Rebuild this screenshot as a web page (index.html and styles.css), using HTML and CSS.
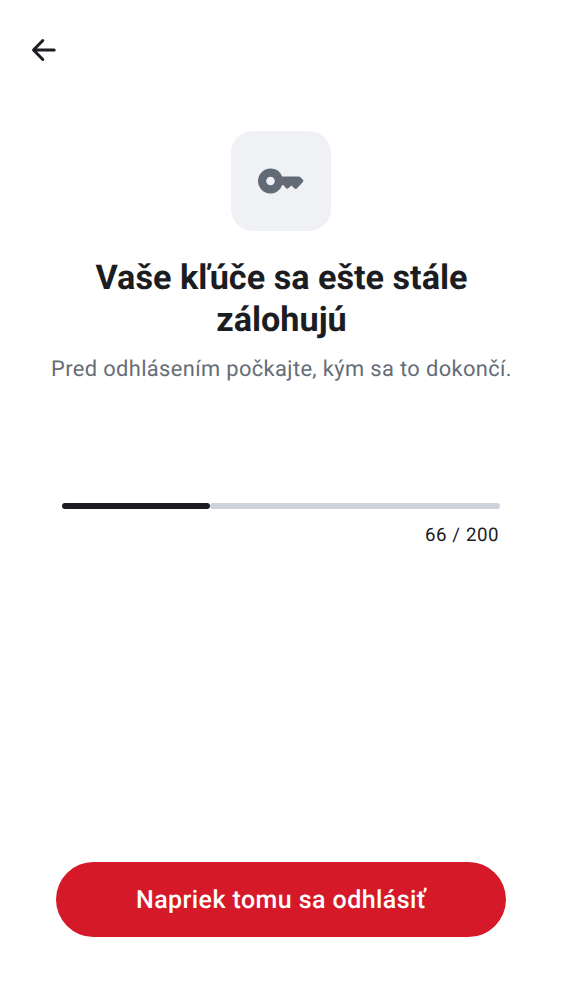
FILE: index.html
```html
<!DOCTYPE html>
<html lang="sk">
<head>
<meta charset="utf-8">
<title>Zálohovanie kľúčov</title>
<link rel="stylesheet" href="styles.css">
</head>
<body>
<div class="screen">
  <header class="topbar">
    <button class="back" aria-label="Späť">
      <svg width="25" height="24" viewBox="0 0 25 24" fill="none" stroke="#1b1d22" stroke-width="3" stroke-linecap="round" stroke-linejoin="round"><path d="M3 12H23.2M11.8 2.5L2.5 12L11.8 21.5"/></svg>
    </button>
  </header>
  <main class="content">
    <div class="tile">
      <svg width="46" height="26" viewBox="0 0 46 26"><path fill="#626a75" fill-rule="evenodd" d="M12.5 .5a12.5 12.5 0 1 0 11.8 16.6h.9l3 3.2q1 .9 2.1 0l3-2.8 3.3 3q1.1 1 2.2-.1l6.1-6.5q.9-1.1 0-2.2l-2.7-2.7q-.5-.4-1.2-.4H24.2A12.5 12.5 0 0 0 12.5 .5ZM12.5 8.7a4.3 4.3 0 1 1 0 8.6 4.3 4.3 0 0 1 0-8.6Z"/></svg>
    </div>
    <h1 class="title">Vaše kľúče sa ešte stále zálohujú</h1>
    <p class="subtitle">Pred odhlásením počkajte, kým sa to dokončí.</p>
    <div class="progress">
      <div class="track"><div class="fill" style="width:33.8%"></div><div class="rest"></div></div>
      <p class="count">66 / 200</p>
    </div>
  </main>
  <footer class="footer">
    <button class="signout">Napriek tomu sa odhlásiť</button>
  </footer>
</div>
</body>
</html>
```
FILE: styles.css
```css
* { box-sizing: border-box; margin: 0; }
body { background: #fff; color: #1b1d22; font-family: Roboto, sans-serif; text-rendering: geometricPrecision; }
.screen { height: 1000px; display: flex; flex-direction: column; padding-bottom: 62.6px; }
.topbar { height: 100px; padding: 38px 31px 0; }
.back { display: block; padding: 0; border: 0; background: none; height: 24px; }
.back svg { display: block; }
.content { flex: 1; display: flex; flex-direction: column; align-items: center; padding-top: 31px; }
.tile { width: 100px; height: 100px; border-radius: 22px; background: #f0f1f5; display: flex; align-items: center; justify-content: center; }
.tile svg { display: block; }
.title { width: 450px; margin-top: 26px; padding-left: 1px; font-size: 34.2px; line-height: 42.2px; font-weight: 700; text-align: center; }
.subtitle { margin-top: 13px; padding-left: 1px; font-size: 21.86px; line-height: 31px; letter-spacing: .37px; color: #656d77; white-space: nowrap; }
.progress { width: 437.4px; margin-top: 117.8px; }
.track { display: flex; height: 6.2px; }
.fill, .rest { border-radius: 4px; }
.fill { background: #1b1d22; }
.rest { flex: 1; background: #cdd3da; }
.count { margin-top: 13.8px; padding-right: .5px; font-size: 18.7px; line-height: 25px; letter-spacing: .6px; text-align: right; }
.footer { padding: 0 56px; }
.signout { display: block; width: 100%; height: 75px; padding: 3px 0 0; border: 0; border-radius: 38px; background: #d51928; color: #fff; font: 500 25px/38px Roboto, sans-serif; letter-spacing: .42px; text-rendering: inherit; }
```
